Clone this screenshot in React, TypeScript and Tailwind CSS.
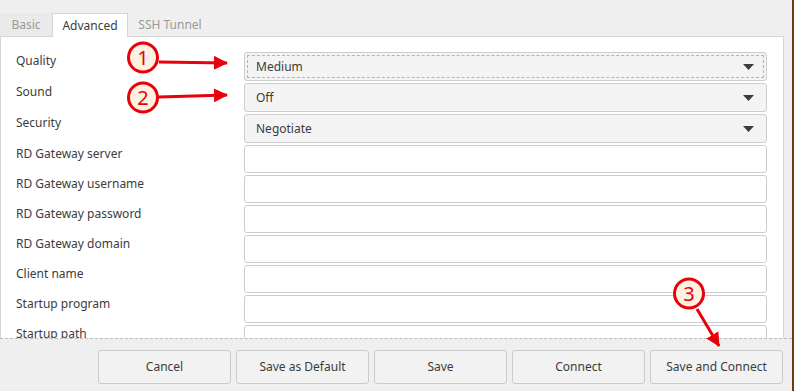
import React from "react";

type Field = { label: string; kind: "combo" | "entry"; value?: string; focus?: boolean };

const fields: Field[] = [
  { label: "Quality", kind: "combo", value: "Medium", focus: true },
  { label: "Sound", kind: "combo", value: "Off" },
  { label: "Security", kind: "combo", value: "Negotiate" },
  { label: "RD Gateway server", kind: "entry" },
  { label: "RD Gateway username", kind: "entry" },
  { label: "RD Gateway password", kind: "entry" },
  { label: "RD Gateway domain", kind: "entry" },
  { label: "Client name", kind: "entry" },
  { label: "Startup program", kind: "entry" },
  { label: "Startup path", kind: "entry" },
];

const buttons = ["Cancel", "Save as Default", "Save", "Connect", "Save and Connect"];

const Caret = () => (
  <svg width="11" height="6" viewBox="0 0 11 6" className="shrink-0">
    <path d="M0 0 H11 L5.5 6 Z" fill="#3c3c3c" />
  </svg>
);

const Row = ({ f }: { f: Field }) => (
  <div className={`flex items-start ${f.kind === "combo" ? "h-[31px]" : "h-[30px]"}`}>
    <div className="w-[243px] pl-[15px] pt-px leading-[16px]">{f.label}</div>
    {f.kind === "combo" ? (
      <div className="w-[523px] h-[29px] rounded-[3px] border border-[#cdcdcd] bg-[#f4f4f4] p-[2px]">
        <div
          className={`h-full flex items-center justify-between pl-[8px] pr-[9px] ${
            f.focus ? "border border-dashed border-[#b5b5b5]" : "border border-transparent"
          }`}
        >
          <span>{f.value}</span>
          <Caret />
        </div>
      </div>
    ) : (
      <div className="w-[523px] h-[28px] rounded-[3px] border border-[#cdcdcd] bg-white" />
    )}
  </div>
);

const Annotations = () => (
  <svg width="794" height="391" className="absolute inset-0 pointer-events-none">
    <defs>
      <marker id="head" markerWidth="14" markerHeight="14" refX="13" refY="7" orient="auto" markerUnits="userSpaceOnUse">
        <path d="M0 0 L14 7 L0 14 Z" fill="#e8000b" />
      </marker>
    </defs>
    <g stroke="#e8000b" strokeWidth="3" fill="none">
      <line x1="159" y1="62" x2="227" y2="63" markerEnd="url(#head)" />
      <line x1="159" y1="97" x2="227" y2="95" markerEnd="url(#head)" />
      <line x1="697" y1="309" x2="719" y2="346" markerEnd="url(#head)" />
    </g>
    <g stroke="#e8000b" strokeWidth="3" fill="#fdf1e1">
      <circle cx="143" cy="57.5" r="14.5" />
      <circle cx="143" cy="97.5" r="14.5" />
      <circle cx="689" cy="293.5" r="14.5" />
    </g>
    <g fill="#e8000b" fontSize="20" fontFamily="'Noto Sans', sans-serif" textAnchor="middle">
      <text x="143" y="64.5">1</text>
      <text x="143" y="104.5">2</text>
      <text x="689" y="300.5">3</text>
    </g>
  </svg>
);

export default function App() {
  return (
    <div className="relative w-[794px] h-[391px] overflow-hidden flex bg-[#efefef] text-[12px] text-[#3c3c3c] font-['Noto_Sans',sans-serif]">
      <div className="w-[792px] flex flex-col">
        <div className="h-[36px] pt-[13px] flex items-end">
          <div className="w-[52px] h-[23px] flex items-center justify-center text-[#9a9a9a] bg-[#eaeaea]">Basic</div>
          <div className="w-[76px] h-[24px] flex items-center justify-center bg-white border border-b-0 border-[#d6d6d6] relative -mb-px z-10">
            Advanced
          </div>
          <div className="w-[84px] h-[23px] flex items-center justify-center text-[#9a9a9a]">SSH Tunnel</div>
        </div>
        <div className="w-[784px] h-[302px] bg-white border border-b-0 border-[#d6d6d6] overflow-hidden pt-[15px]">
          {fields.map((f) => (
            <Row key={f.label} f={f} />
          ))}
        </div>
        <div className="flex-1 border-t border-dashed border-[#bdbdbd] flex justify-end gap-[5px] pr-[9px] pt-[11px]">
          {buttons.map((b) => (
            <button
              key={b}
              className="w-[133px] h-[34px] rounded-[3px] border border-[#cbcbcb] bg-[#f2f2f2] text-[#3c3c3c]"
            >
              {b}
            </button>
          ))}
        </div>
      </div>
      <div className="w-[2px] bg-[#6a3d0c]" />
      <Annotations />
    </div>
  );
}
